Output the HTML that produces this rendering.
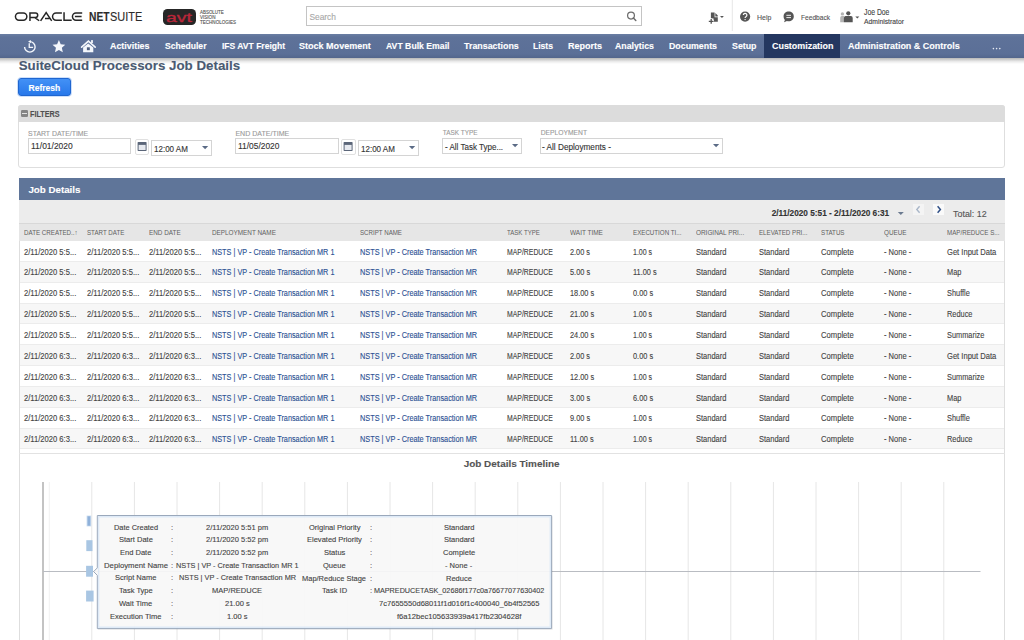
<!DOCTYPE html><html><head><meta charset="utf-8"><style>
html,body{margin:0;padding:0;}
body{width:1024px;height:640px;overflow:hidden;position:relative;background:#fff;font-family:"Liberation Sans",sans-serif;}
.t{position:absolute;white-space:nowrap;line-height:1;transform-origin:0 0;-webkit-text-stroke:0.12px currentColor;}
.r{position:absolute;box-sizing:border-box;}
svg{position:absolute;overflow:visible;}
</style></head><body>
<div class="r" style="left:0px;top:0px;width:1024px;height:34px;background:#fff"></div>
<svg style="left:0;top:0" width="160" height="34" viewBox="0 0 160 34">
<g fill="none" stroke="#262626" stroke-width="1.5">
<rect x="15.45" y="13.05" width="11.4" height="7.1" rx="3.55"/>
<path d="M29.95 20.9V13.05H35.5A2.2 2.2 0 0 1 35.5 17.45H30.7M34.6 17.45L39.2 20.75"/>
<path d="M40.6 20.8L46.15 12.7L51.7 20.8M45 18.5H49.8"/>
<path d="M61.9 13.05H56.1A3.55 3.55 0 0 0 56.1 20.15H61.9"/>
<path d="M64.05 12.3V20.15H71.7"/>
<path d="M82.2 13.05H76A3.55 3.55 0 0 0 76 20.15H82.2M74.9 16.6H81.6"/>
</g></svg>
<div class="t" style="left:88.60px;top:12px;font-size:11.919px;color:#2b2b2b;font-weight:bold;transform:scaleX(0.8600);">NET</div>
<div class="t" style="left:110.20px;top:12px;font-size:11.919px;color:#2b2b2b;transform:scaleX(0.9202);">SUITE</div>
<div class="r" style="left:163px;top:8.5px;width:33px;height:16.7px;background:#262626;border-radius:4.5px"></div>
<div class="t" style="left:166.20px;top:11px;font-size:13.000px;color:#b8263a;transform:scaleX(1.4877);-webkit-text-stroke:0.35px #b8263a;">avt</div>
<div class="t" style="left:199.80px;top:11px;font-size:4.651px;color:#555;transform:scaleX(0.9591);">ABSOLUTE</div>
<div class="t" style="left:199.80px;top:16px;font-size:4.651px;color:#555;transform:scaleX(0.9830);">VISION</div>
<div class="t" style="left:199.80px;top:21px;font-size:4.651px;color:#555;transform:scaleX(0.9795);">TECHNOLOGIES</div>
<div class="r" style="left:306px;top:6.2px;width:336px;height:20px;border:1px solid #c4c4c4;background:#fff"></div>
<div class="t" style="left:309.40px;top:13px;font-size:8.396px;color:#a8a8a8;">Search</div>
<svg style="left:620px;top:6px" width="22" height="20" viewBox="620 6 22 20">
<circle cx="631" cy="15.6" r="3.4" fill="none" stroke="#6d6d6d" stroke-width="1.25"/>
<path d="M633.4 18l2.4 2.5" stroke="#6d6d6d" stroke-width="1.5" stroke-linecap="round"/></svg>
<svg style="left:700px;top:0" width="220" height="34" viewBox="700 0 220 34">
<path d="M710.9 12.6H714.6V17.2H717.8V21.8H713.6V18.6H710.9Z" fill="#555"/>
<path d="M715.3 13.0L717.8 15.6V16.5H715.3Z" fill="#555"/>
<path d="M708.4 21.4H714M711.2 18.6V24.2" stroke="#fff" stroke-width="2.6"/>
<path d="M708.8 21.4H713.6M711.2 19V23.8" stroke="#555" stroke-width="1.3"/>
<path d="M720 16H723.9L721.95 18Z" fill="#555"/>
<path d="M732.3 0v31" stroke="#e6e6e6" stroke-width="1"/>
<circle cx="745.1" cy="16.6" r="5.1" fill="#555"/>
<path d="M743.3 15.1a1.8 1.8 0 1 1 2.6 1.6c-.6.3-.8.6-.8 1.2" fill="none" stroke="#fff" stroke-width="1.2"/>
<circle cx="745.1" cy="19.6" r=".7" fill="#fff"/>
<path d="M783.6 16.4c0-2.9 2.3-4.8 5.1-4.8s5.1 1.9 5.1 4.8-2.3 4.8-5.1 4.8c-.6 0-1.2-.1-1.7-.3l-3 1.4.9-2.4c-.8-.9-1.3-2-1.3-3.5z" fill="#555"/>
<path d="M786.4 15.3h4.6M786.4 17.6h4.6" stroke="#fff" stroke-width=".9"/>
<circle cx="842.4" cy="13.9" r="1.7" fill="#b4b4b4"/>
<path d="M840.2 22.3V17.7A1.6 1.6 0 0 1 841.8 16.1H844V22.3Z" fill="#b4b4b4"/>
<circle cx="848.3" cy="13.3" r="2.1" fill="#555"/>
<path d="M843.9 22.3V17.9A1.8 1.8 0 0 1 845.7 16.1H850.9A1.8 1.8 0 0 1 852.7 17.9V22.3Z" fill="#555"/>
<path d="M855.3 16.4h4l-2 2.2z" fill="#555"/>
</svg>
<div class="t" style="left:757.00px;top:14px;font-size:7.400px;color:#555;transform:scaleX(0.9394);">Help</div>
<div class="t" style="left:801.00px;top:14px;font-size:7.400px;color:#555;transform:scaleX(0.8950);">Feedback</div>
<div class="t" style="left:863.80px;top:8px;font-size:8.300px;color:#444;transform:scaleX(0.8215);">Joe Doe</div>
<div class="t" style="left:863.80px;top:19px;font-size:6.900px;color:#444;transform:scaleX(0.9841);">Administrator</div>
<div class="r" style="left:0px;top:34px;width:1024px;height:24px;background:linear-gradient(#6a7ea3 0px,#5e7299 3px,#5b6f97 20px,#53668c 24px)"></div>
<div class="r" style="left:0px;top:58px;width:1024px;height:6px;background:linear-gradient(rgba(0,0,0,0.28),rgba(0,0,0,0.08) 60%,rgba(0,0,0,0))"></div>
<div class="r" style="left:764px;top:34px;width:76.4px;height:24px;background:#243760"></div>
<svg style="left:0;top:34px" width="110" height="24" viewBox="0 34 110 24">
<path d="M24.6 46.9A5.25 5.25 0 1 0 29.85 41.65" fill="none" stroke="#f4f7fc" stroke-width="1.4"/>
<path d="M28.1 41.6L30.9 39.9V43.3Z" fill="#f4f7fc"/>
<path d="M29.25 43.3V47.45H33.1" fill="none" stroke="#f4f7fc" stroke-width="1.3"/>
<path d="M58.90 40.10L60.71 44.31L65.27 44.73L61.83 47.75L62.84 52.22L58.90 49.88L54.96 52.22L55.97 47.75L52.53 44.73L57.09 44.31Z" fill="#f4f7fc"/>
<path d="M81.6 47.1L88.4 41.1L95.2 47.1" fill="none" stroke="#f4f7fc" stroke-width="1.6" stroke-linecap="round"/>
<rect x="91.1" y="40.1" width="1.8" height="2.9" fill="#f4f7fc"/>
<path d="M83.1 47.6L88.2 43.4L93.3 47.6V52.3H83.1Z" fill="#f4f7fc"/>
<rect x="86.9" y="47.3" width="2.9" height="2.9" fill="#4f5f80"/>
</svg>
<div class="t" style="left:110.30px;top:42px;font-size:8.850px;color:#fff;font-weight:bold;transform:scaleX(1.0039);">Activities</div>
<div class="t" style="left:164.50px;top:42px;font-size:8.850px;color:#fff;font-weight:bold;transform:scaleX(0.9699);">Scheduler</div>
<div class="t" style="left:221.60px;top:42px;font-size:8.850px;color:#fff;font-weight:bold;transform:scaleX(0.9649);">IFS AVT Freight</div>
<div class="t" style="left:299.40px;top:42px;font-size:8.850px;color:#fff;font-weight:bold;transform:scaleX(1.0210);">Stock Movement</div>
<div class="t" style="left:385.90px;top:42px;font-size:8.850px;color:#fff;font-weight:bold;transform:scaleX(0.9807);">AVT Bulk Email</div>
<div class="t" style="left:464.30px;top:42px;font-size:8.850px;color:#fff;font-weight:bold;transform:scaleX(1.0037);">Transactions</div>
<div class="t" style="left:533.30px;top:42px;font-size:8.850px;color:#fff;font-weight:bold;transform:scaleX(0.9682);">Lists</div>
<div class="t" style="left:567.50px;top:42px;font-size:8.850px;color:#fff;font-weight:bold;transform:scaleX(1.0169);">Reports</div>
<div class="t" style="left:615.30px;top:42px;font-size:8.850px;color:#fff;font-weight:bold;transform:scaleX(0.9912);">Analytics</div>
<div class="t" style="left:669.20px;top:42px;font-size:8.850px;color:#fff;font-weight:bold;transform:scaleX(0.9961);">Documents</div>
<div class="t" style="left:732.00px;top:42px;font-size:8.850px;color:#fff;font-weight:bold;transform:scaleX(0.9965);">Setup</div>
<div class="t" style="left:771.60px;top:42px;font-size:8.850px;color:#fff;font-weight:bold;transform:scaleX(1.0087);">Customization</div>
<div class="t" style="left:847.60px;top:42px;font-size:8.850px;color:#fff;font-weight:bold;transform:scaleX(1.0152);">Administration &amp; Controls</div>
<svg style="left:990px;top:46px" width="14" height="6" viewBox="990 46 14 6"><circle cx="993.4" cy="48.6" r=".8" fill="#e8ecf4"/><circle cx="996.6" cy="48.6" r=".8" fill="#e8ecf4"/><circle cx="999.8" cy="48.6" r=".8" fill="#e8ecf4"/></svg>
<div class="t" style="left:18.70px;top:59px;font-size:13.331px;color:#4a5a72;font-weight:bold;">SuiteCloud Processors Job Details</div>
<div class="r" style="left:17.8px;top:77.6px;width:53.2px;height:18.8px;background:linear-gradient(#4391f6,#2878ea);border:1px solid #1f66d0;border-radius:3px;box-shadow:0 0 0 0.8px rgba(110,165,240,0.45)"></div>
<div class="t" style="left:28.50px;top:84px;font-size:8.539px;color:#fff;font-weight:bold;">Refresh</div>
<div class="r" style="left:18.2px;top:105.1px;width:987.2px;height:63.3px;border:1px solid #dedede;border-radius:3px;background:#fff"></div>
<div class="r" style="left:18.2px;top:105.1px;width:987.2px;height:17.1px;background:#dcdcdc;border-radius:3px 3px 0 0"></div>
<div class="r" style="left:20.9px;top:109.7px;width:6.9px;height:6.9px;background:#858585;border-radius:1.2px"></div>
<div class="r" style="left:21.9px;top:112.5px;width:4.9px;height:1.5px;background:#e4e4e4"></div>
<div class="t" style="left:30.20px;top:110px;font-size:8.400px;color:#505050;font-weight:bold;transform:scaleX(0.8641);">FILTERS</div>
<div class="t" style="left:28.10px;top:131px;font-size:6.916px;color:#9a9a9a;">START DATE/TIME</div>
<div class="t" style="left:235.40px;top:130px;font-size:7.061px;color:#9a9a9a;">END DATE/TIME</div>
<div class="t" style="left:442.80px;top:130px;font-size:6.415px;color:#9a9a9a;">TASK TYPE</div>
<div class="t" style="left:540.70px;top:130px;font-size:6.720px;color:#9a9a9a;">DEPLOYMENT</div>
<div class="r" style="left:28.1px;top:138.4px;width:103.2px;height:16px;border:1px solid #d4d4d4;background:#fff"></div>
<div class="r" style="left:235px;top:138.4px;width:103.6px;height:16px;border:1px solid #d4d4d4;background:#fff"></div>
<div class="t" style="left:30.50px;top:142px;font-size:8.500px;color:#333;transform:scaleX(0.9949);">11/01/2020</div>
<div class="t" style="left:238.00px;top:142px;font-size:8.500px;color:#333;transform:scaleX(0.9877);">11/05/2020</div>
<div class="r" style="left:134.5px;top:139px;width:14.4px;height:15.6px;border:1px solid #e0e0e0;border-radius:2px;background:#fff"></div>
<svg style="left:134.5px;top:139px" width="14" height="16" viewBox="0 0 14 16">
<rect x="2.6" y="3.0" width="9" height="9" rx=".7" fill="#5b6679"/>
<rect x="3.6" y="5.9" width="7" height="5.1" fill="#e6e9ef"/></svg>
<div class="r" style="left:341.4px;top:139px;width:14.4px;height:15.6px;border:1px solid #e0e0e0;border-radius:2px;background:#fff"></div>
<svg style="left:341.4px;top:139px" width="14" height="16" viewBox="0 0 14 16">
<rect x="2.6" y="3.0" width="9" height="9" rx=".7" fill="#5b6679"/>
<rect x="3.6" y="5.9" width="7" height="5.1" fill="#e6e9ef"/></svg>
<div class="r" style="left:151.1px;top:139.6px;width:60.7px;height:16.1px;border:1px solid #d4d4d4;background:#fff"></div>
<div class="t" style="left:153.80px;top:145px;font-size:8.500px;color:#333;transform:scaleX(0.9440);">12:00 AM</div>
<svg style="left:202.20px;top:146.00px" width="7" height="4" viewBox="0 0 7 4"><path d="M0 0h6.2l-3.1 3.3z" fill="#5b6b86"/></svg>
<div class="r" style="left:358px;top:139.6px;width:61px;height:16px;border:1px solid #d4d4d4;background:#fff"></div>
<div class="t" style="left:360.60px;top:145px;font-size:8.500px;color:#333;transform:scaleX(0.9440);">12:00 AM</div>
<svg style="left:409.40px;top:146.00px" width="7" height="4" viewBox="0 0 7 4"><path d="M0 0h6.2l-3.1 3.3z" fill="#5b6b86"/></svg>
<div class="r" style="left:442.3px;top:137.7px;width:79.4px;height:16.1px;border:1px solid #d4d4d4;background:#fff"></div>
<div class="t" style="left:445.30px;top:143px;font-size:8.500px;color:#333;transform:scaleX(0.9436);">- All Task Type...</div>
<svg style="left:512.10px;top:144.10px" width="7" height="4" viewBox="0 0 7 4"><path d="M0 0h6.2l-3.1 3.3z" fill="#5b6b86"/></svg>
<div class="r" style="left:540.2px;top:138px;width:182.8px;height:15.7px;border:1px solid #d4d4d4;background:#fff"></div>
<div class="t" style="left:542.10px;top:143px;font-size:8.500px;color:#333;transform:scaleX(0.9659);">- All Deployments -</div>
<svg style="left:713.40px;top:144.40px" width="7" height="4" viewBox="0 0 7 4"><path d="M0 0h6.2l-3.1 3.3z" fill="#5b6b86"/></svg>
<div class="r" style="left:18.5px;top:178.5px;width:986.3px;height:462px;border-left:1px solid #dedede;border-right:1px solid #dedede;background:#fff"></div>
<div class="r" style="left:18.5px;top:178.3px;width:986.3px;height:21.7px;background:#5f7599"></div>
<div class="t" style="left:28.40px;top:185px;font-size:9.750px;color:#fff;font-weight:bold;">Job Details</div>
<div class="r" style="left:18.5px;top:200px;width:986.3px;height:23px;background:#ececec"></div>
<div class="r" style="left:18.5px;top:223px;width:986.3px;height:1px;background:#d8d8d8"></div>
<div class="r" style="left:18.5px;top:224.3px;width:986.3px;height:16.7px;background:#e6e6e6"></div>
<div class="t" style="left:771.70px;top:210px;font-size:8.269px;color:#333;font-weight:bold;">2/11/2020 5:51 - 2/11/2020 6:31</div>
<svg style="left:896px;top:210px" width="10" height="6" viewBox="896 210 10 6"><path d="M897.8 212h6l-3 3.1z" fill="#6b7a90"/></svg>
<div class="r" style="left:912.6px;top:204px;width:11px;height:11px;background:#f4f4f4"></div>
<div class="r" style="left:933.3px;top:204px;width:11px;height:11px;background:#fafafa"></div>
<svg style="left:910px;top:202px" width="40" height="16" viewBox="910 202 40 16">
<path d="M919.6 206.3l-2.8 3.2 2.8 3.2" fill="none" stroke="#a9b6c8" stroke-width="1.4"/>
<path d="M937.6 206.3l2.8 3.2-2.8 3.2" fill="none" stroke="#2f4f86" stroke-width="1.5"/></svg>
<div class="t" style="left:952.90px;top:210px;font-size:8.600px;color:#555;transform:scaleX(1.0367);">Total: 12</div>
<div class="t" style="left:23.90px;top:230px;font-size:6.800px;color:#606060;transform:scaleX(0.9151);-webkit-text-stroke:0;">DATE CREATED..↑</div>
<div class="t" style="left:86.75px;top:230px;font-size:6.800px;color:#606060;transform:scaleX(0.9085);-webkit-text-stroke:0;">START DATE</div>
<div class="t" style="left:149.40px;top:230px;font-size:6.800px;color:#606060;transform:scaleX(0.9357);-webkit-text-stroke:0;">END DATE</div>
<div class="t" style="left:212.40px;top:230px;font-size:6.800px;color:#606060;transform:scaleX(0.9361);-webkit-text-stroke:0;">DEPLOYMENT NAME</div>
<div class="t" style="left:359.90px;top:230px;font-size:6.800px;color:#606060;transform:scaleX(0.9062);-webkit-text-stroke:0;">SCRIPT NAME</div>
<div class="t" style="left:507.00px;top:230px;font-size:6.800px;color:#606060;transform:scaleX(0.8918);-webkit-text-stroke:0;">TASK TYPE</div>
<div class="t" style="left:569.90px;top:230px;font-size:6.800px;color:#606060;transform:scaleX(0.9500);-webkit-text-stroke:0;">WAIT TIME</div>
<div class="t" style="left:632.90px;top:230px;font-size:6.800px;color:#606060;transform:scaleX(0.9107);-webkit-text-stroke:0;">EXECUTION TI...</div>
<div class="t" style="left:695.60px;top:230px;font-size:6.800px;color:#606060;transform:scaleX(0.9426);-webkit-text-stroke:0;">ORIGINAL PRI...</div>
<div class="t" style="left:758.75px;top:230px;font-size:6.800px;color:#606060;transform:scaleX(0.9081);-webkit-text-stroke:0;">ELEVATED PRI...</div>
<div class="t" style="left:821.25px;top:230px;font-size:6.800px;color:#606060;transform:scaleX(0.9104);-webkit-text-stroke:0;">STATUS</div>
<div class="t" style="left:883.75px;top:230px;font-size:6.800px;color:#606060;transform:scaleX(0.9305);-webkit-text-stroke:0;">QUEUE</div>
<div class="t" style="left:946.90px;top:230px;font-size:6.800px;color:#606060;transform:scaleX(0.9141);-webkit-text-stroke:0;">MAP/REDUCE S...</div>
<div class="r" style="left:19.5px;top:241.0px;width:984.3px;height:20.85px;background:#fff;border-bottom:1px solid #ececec"></div>
<div class="t" style="left:23.90px;top:248px;font-size:8.300px;color:#444;transform:scaleX(0.9164);">2/11/2020 5:5...</div>
<div class="t" style="left:86.75px;top:248px;font-size:8.300px;color:#444;transform:scaleX(0.9164);">2/11/2020 5:5...</div>
<div class="t" style="left:149.40px;top:248px;font-size:8.300px;color:#444;transform:scaleX(0.9164);">2/11/2020 5:5...</div>
<div class="t" style="left:212.40px;top:248px;font-size:8.300px;color:#2b5193;transform:scaleX(0.8784);">NSTS | VP - Create Transaction MR 1</div>
<div class="t" style="left:359.90px;top:248px;font-size:8.300px;color:#2b5193;transform:scaleX(0.8835);">NSTS | VP - Create Transaction MR</div>
<div class="t" style="left:507.00px;top:248px;font-size:8.300px;color:#444;transform:scaleX(0.8294);">MAP/REDUCE</div>
<div class="t" style="left:569.90px;top:248px;font-size:8.300px;color:#444;transform:scaleX(0.8846);">2.00 s</div>
<div class="t" style="left:632.90px;top:248px;font-size:8.300px;color:#444;transform:scaleX(0.8448);">1.00 s</div>
<div class="t" style="left:695.60px;top:248px;font-size:8.300px;color:#444;transform:scaleX(0.9024);">Standard</div>
<div class="t" style="left:758.75px;top:248px;font-size:8.300px;color:#444;transform:scaleX(0.9024);">Standard</div>
<div class="t" style="left:821.25px;top:248px;font-size:8.300px;color:#444;transform:scaleX(0.9219);">Complete</div>
<div class="t" style="left:883.75px;top:248px;font-size:8.300px;color:#444;transform:scaleX(0.9090);">- None -</div>
<div class="t" style="left:946.90px;top:248px;font-size:8.300px;color:#444;transform:scaleX(0.9140);">Get Input Data</div>
<div class="r" style="left:19.5px;top:261.85px;width:984.3px;height:20.85px;background:#f7f7f7;border-bottom:1px solid #ececec"></div>
<div class="t" style="left:23.90px;top:268px;font-size:8.300px;color:#444;transform:scaleX(0.9164);">2/11/2020 5:5...</div>
<div class="t" style="left:86.75px;top:268px;font-size:8.300px;color:#444;transform:scaleX(0.9164);">2/11/2020 5:5...</div>
<div class="t" style="left:149.40px;top:268px;font-size:8.300px;color:#444;transform:scaleX(0.9164);">2/11/2020 5:5...</div>
<div class="t" style="left:212.40px;top:268px;font-size:8.300px;color:#2b5193;transform:scaleX(0.8784);">NSTS | VP - Create Transaction MR 1</div>
<div class="t" style="left:359.90px;top:268px;font-size:8.300px;color:#2b5193;transform:scaleX(0.8835);">NSTS | VP - Create Transaction MR</div>
<div class="t" style="left:507.00px;top:268px;font-size:8.300px;color:#444;transform:scaleX(0.8294);">MAP/REDUCE</div>
<div class="t" style="left:569.90px;top:268px;font-size:8.300px;color:#444;transform:scaleX(0.8900);">5.00 s</div>
<div class="t" style="left:632.90px;top:268px;font-size:8.300px;color:#444;transform:scaleX(0.8900);">11.00 s</div>
<div class="t" style="left:695.60px;top:268px;font-size:8.300px;color:#444;transform:scaleX(0.9024);">Standard</div>
<div class="t" style="left:758.75px;top:268px;font-size:8.300px;color:#444;transform:scaleX(0.9024);">Standard</div>
<div class="t" style="left:821.25px;top:268px;font-size:8.300px;color:#444;transform:scaleX(0.9219);">Complete</div>
<div class="t" style="left:883.75px;top:268px;font-size:8.300px;color:#444;transform:scaleX(0.9090);">- None -</div>
<div class="t" style="left:946.90px;top:268px;font-size:8.300px;color:#444;transform:scaleX(0.8900);">Map</div>
<div class="r" style="left:19.5px;top:282.7px;width:984.3px;height:20.85px;background:#fff;border-bottom:1px solid #ececec"></div>
<div class="t" style="left:23.90px;top:289px;font-size:8.300px;color:#444;transform:scaleX(0.9164);">2/11/2020 5:5...</div>
<div class="t" style="left:86.75px;top:289px;font-size:8.300px;color:#444;transform:scaleX(0.9164);">2/11/2020 5:5...</div>
<div class="t" style="left:149.40px;top:289px;font-size:8.300px;color:#444;transform:scaleX(0.9164);">2/11/2020 5:5...</div>
<div class="t" style="left:212.40px;top:289px;font-size:8.300px;color:#2b5193;transform:scaleX(0.8784);">NSTS | VP - Create Transaction MR 1</div>
<div class="t" style="left:359.90px;top:289px;font-size:8.300px;color:#2b5193;transform:scaleX(0.8835);">NSTS | VP - Create Transaction MR</div>
<div class="t" style="left:507.00px;top:289px;font-size:8.300px;color:#444;transform:scaleX(0.8294);">MAP/REDUCE</div>
<div class="t" style="left:569.90px;top:289px;font-size:8.300px;color:#444;transform:scaleX(0.8900);">18.00 s</div>
<div class="t" style="left:632.90px;top:289px;font-size:8.300px;color:#444;transform:scaleX(0.8900);">0.00 s</div>
<div class="t" style="left:695.60px;top:289px;font-size:8.300px;color:#444;transform:scaleX(0.9024);">Standard</div>
<div class="t" style="left:758.75px;top:289px;font-size:8.300px;color:#444;transform:scaleX(0.9024);">Standard</div>
<div class="t" style="left:821.25px;top:289px;font-size:8.300px;color:#444;transform:scaleX(0.9219);">Complete</div>
<div class="t" style="left:883.75px;top:289px;font-size:8.300px;color:#444;transform:scaleX(0.9090);">- None -</div>
<div class="t" style="left:946.90px;top:289px;font-size:8.300px;color:#444;transform:scaleX(0.8900);">Shuffle</div>
<div class="r" style="left:19.5px;top:303.55px;width:984.3px;height:20.85px;background:#f7f7f7;border-bottom:1px solid #ececec"></div>
<div class="t" style="left:23.90px;top:310px;font-size:8.300px;color:#444;transform:scaleX(0.9164);">2/11/2020 5:5...</div>
<div class="t" style="left:86.75px;top:310px;font-size:8.300px;color:#444;transform:scaleX(0.9164);">2/11/2020 5:5...</div>
<div class="t" style="left:149.40px;top:310px;font-size:8.300px;color:#444;transform:scaleX(0.9164);">2/11/2020 5:5...</div>
<div class="t" style="left:212.40px;top:310px;font-size:8.300px;color:#2b5193;transform:scaleX(0.8784);">NSTS | VP - Create Transaction MR 1</div>
<div class="t" style="left:359.90px;top:310px;font-size:8.300px;color:#2b5193;transform:scaleX(0.8835);">NSTS | VP - Create Transaction MR</div>
<div class="t" style="left:507.00px;top:310px;font-size:8.300px;color:#444;transform:scaleX(0.8294);">MAP/REDUCE</div>
<div class="t" style="left:569.90px;top:310px;font-size:8.300px;color:#444;transform:scaleX(0.8900);">21.00 s</div>
<div class="t" style="left:632.90px;top:310px;font-size:8.300px;color:#444;transform:scaleX(0.8448);">1.00 s</div>
<div class="t" style="left:695.60px;top:310px;font-size:8.300px;color:#444;transform:scaleX(0.9024);">Standard</div>
<div class="t" style="left:758.75px;top:310px;font-size:8.300px;color:#444;transform:scaleX(0.9024);">Standard</div>
<div class="t" style="left:821.25px;top:310px;font-size:8.300px;color:#444;transform:scaleX(0.9219);">Complete</div>
<div class="t" style="left:883.75px;top:310px;font-size:8.300px;color:#444;transform:scaleX(0.9090);">- None -</div>
<div class="t" style="left:946.90px;top:310px;font-size:8.300px;color:#444;transform:scaleX(0.8900);">Reduce</div>
<div class="r" style="left:19.5px;top:324.4px;width:984.3px;height:20.85px;background:#fff;border-bottom:1px solid #ececec"></div>
<div class="t" style="left:23.90px;top:331px;font-size:8.300px;color:#444;transform:scaleX(0.9164);">2/11/2020 5:5...</div>
<div class="t" style="left:86.75px;top:331px;font-size:8.300px;color:#444;transform:scaleX(0.9164);">2/11/2020 5:5...</div>
<div class="t" style="left:149.40px;top:331px;font-size:8.300px;color:#444;transform:scaleX(0.9164);">2/11/2020 5:5...</div>
<div class="t" style="left:212.40px;top:331px;font-size:8.300px;color:#2b5193;transform:scaleX(0.8784);">NSTS | VP - Create Transaction MR 1</div>
<div class="t" style="left:359.90px;top:331px;font-size:8.300px;color:#2b5193;transform:scaleX(0.8835);">NSTS | VP - Create Transaction MR</div>
<div class="t" style="left:507.00px;top:331px;font-size:8.300px;color:#444;transform:scaleX(0.8294);">MAP/REDUCE</div>
<div class="t" style="left:569.90px;top:331px;font-size:8.300px;color:#444;transform:scaleX(0.8900);">24.00 s</div>
<div class="t" style="left:632.90px;top:331px;font-size:8.300px;color:#444;transform:scaleX(0.8448);">1.00 s</div>
<div class="t" style="left:695.60px;top:331px;font-size:8.300px;color:#444;transform:scaleX(0.9024);">Standard</div>
<div class="t" style="left:758.75px;top:331px;font-size:8.300px;color:#444;transform:scaleX(0.9024);">Standard</div>
<div class="t" style="left:821.25px;top:331px;font-size:8.300px;color:#444;transform:scaleX(0.9219);">Complete</div>
<div class="t" style="left:883.75px;top:331px;font-size:8.300px;color:#444;transform:scaleX(0.9090);">- None -</div>
<div class="t" style="left:946.90px;top:331px;font-size:8.300px;color:#444;transform:scaleX(0.8900);">Summarize</div>
<div class="r" style="left:19.5px;top:345.25px;width:984.3px;height:20.85px;background:#f7f7f7;border-bottom:1px solid #ececec"></div>
<div class="t" style="left:23.90px;top:352px;font-size:8.300px;color:#444;transform:scaleX(0.9164);">2/11/2020 6:3...</div>
<div class="t" style="left:86.75px;top:352px;font-size:8.300px;color:#444;transform:scaleX(0.9164);">2/11/2020 6:3...</div>
<div class="t" style="left:149.40px;top:352px;font-size:8.300px;color:#444;transform:scaleX(0.9164);">2/11/2020 6:3...</div>
<div class="t" style="left:212.40px;top:352px;font-size:8.300px;color:#2b5193;transform:scaleX(0.8784);">NSTS | VP - Create Transaction MR 1</div>
<div class="t" style="left:359.90px;top:352px;font-size:8.300px;color:#2b5193;transform:scaleX(0.8835);">NSTS | VP - Create Transaction MR</div>
<div class="t" style="left:507.00px;top:352px;font-size:8.300px;color:#444;transform:scaleX(0.8294);">MAP/REDUCE</div>
<div class="t" style="left:569.90px;top:352px;font-size:8.300px;color:#444;transform:scaleX(0.8846);">2.00 s</div>
<div class="t" style="left:632.90px;top:352px;font-size:8.300px;color:#444;transform:scaleX(0.8900);">0.00 s</div>
<div class="t" style="left:695.60px;top:352px;font-size:8.300px;color:#444;transform:scaleX(0.9024);">Standard</div>
<div class="t" style="left:758.75px;top:352px;font-size:8.300px;color:#444;transform:scaleX(0.9024);">Standard</div>
<div class="t" style="left:821.25px;top:352px;font-size:8.300px;color:#444;transform:scaleX(0.9219);">Complete</div>
<div class="t" style="left:883.75px;top:352px;font-size:8.300px;color:#444;transform:scaleX(0.9090);">- None -</div>
<div class="t" style="left:946.90px;top:352px;font-size:8.300px;color:#444;transform:scaleX(0.9140);">Get Input Data</div>
<div class="r" style="left:19.5px;top:366.1px;width:984.3px;height:20.85px;background:#fff;border-bottom:1px solid #ececec"></div>
<div class="t" style="left:23.90px;top:373px;font-size:8.300px;color:#444;transform:scaleX(0.9164);">2/11/2020 6:3...</div>
<div class="t" style="left:86.75px;top:373px;font-size:8.300px;color:#444;transform:scaleX(0.9164);">2/11/2020 6:3...</div>
<div class="t" style="left:149.40px;top:373px;font-size:8.300px;color:#444;transform:scaleX(0.9164);">2/11/2020 6:3...</div>
<div class="t" style="left:212.40px;top:373px;font-size:8.300px;color:#2b5193;transform:scaleX(0.8784);">NSTS | VP - Create Transaction MR 1</div>
<div class="t" style="left:359.90px;top:373px;font-size:8.300px;color:#2b5193;transform:scaleX(0.8835);">NSTS | VP - Create Transaction MR</div>
<div class="t" style="left:507.00px;top:373px;font-size:8.300px;color:#444;transform:scaleX(0.8294);">MAP/REDUCE</div>
<div class="t" style="left:569.90px;top:373px;font-size:8.300px;color:#444;transform:scaleX(0.8900);">12.00 s</div>
<div class="t" style="left:632.90px;top:373px;font-size:8.300px;color:#444;transform:scaleX(0.8448);">1.00 s</div>
<div class="t" style="left:695.60px;top:373px;font-size:8.300px;color:#444;transform:scaleX(0.9024);">Standard</div>
<div class="t" style="left:758.75px;top:373px;font-size:8.300px;color:#444;transform:scaleX(0.9024);">Standard</div>
<div class="t" style="left:821.25px;top:373px;font-size:8.300px;color:#444;transform:scaleX(0.9219);">Complete</div>
<div class="t" style="left:883.75px;top:373px;font-size:8.300px;color:#444;transform:scaleX(0.9090);">- None -</div>
<div class="t" style="left:946.90px;top:373px;font-size:8.300px;color:#444;transform:scaleX(0.8900);">Summarize</div>
<div class="r" style="left:19.5px;top:386.95000000000005px;width:984.3px;height:20.85px;background:#f7f7f7;border-bottom:1px solid #ececec"></div>
<div class="t" style="left:23.90px;top:394px;font-size:8.300px;color:#444;transform:scaleX(0.9164);">2/11/2020 6:3...</div>
<div class="t" style="left:86.75px;top:394px;font-size:8.300px;color:#444;transform:scaleX(0.9164);">2/11/2020 6:3...</div>
<div class="t" style="left:149.40px;top:394px;font-size:8.300px;color:#444;transform:scaleX(0.9164);">2/11/2020 6:3...</div>
<div class="t" style="left:212.40px;top:394px;font-size:8.300px;color:#2b5193;transform:scaleX(0.8784);">NSTS | VP - Create Transaction MR 1</div>
<div class="t" style="left:359.90px;top:394px;font-size:8.300px;color:#2b5193;transform:scaleX(0.8835);">NSTS | VP - Create Transaction MR</div>
<div class="t" style="left:507.00px;top:394px;font-size:8.300px;color:#444;transform:scaleX(0.8294);">MAP/REDUCE</div>
<div class="t" style="left:569.90px;top:394px;font-size:8.300px;color:#444;transform:scaleX(0.8900);">3.00 s</div>
<div class="t" style="left:632.90px;top:394px;font-size:8.300px;color:#444;transform:scaleX(0.8900);">6.00 s</div>
<div class="t" style="left:695.60px;top:394px;font-size:8.300px;color:#444;transform:scaleX(0.9024);">Standard</div>
<div class="t" style="left:758.75px;top:394px;font-size:8.300px;color:#444;transform:scaleX(0.9024);">Standard</div>
<div class="t" style="left:821.25px;top:394px;font-size:8.300px;color:#444;transform:scaleX(0.9219);">Complete</div>
<div class="t" style="left:883.75px;top:394px;font-size:8.300px;color:#444;transform:scaleX(0.9090);">- None -</div>
<div class="t" style="left:946.90px;top:394px;font-size:8.300px;color:#444;transform:scaleX(0.8900);">Map</div>
<div class="r" style="left:19.5px;top:407.8px;width:984.3px;height:20.85px;background:#fff;border-bottom:1px solid #ececec"></div>
<div class="t" style="left:23.90px;top:414px;font-size:8.300px;color:#444;transform:scaleX(0.9164);">2/11/2020 6:3...</div>
<div class="t" style="left:86.75px;top:414px;font-size:8.300px;color:#444;transform:scaleX(0.9164);">2/11/2020 6:3...</div>
<div class="t" style="left:149.40px;top:414px;font-size:8.300px;color:#444;transform:scaleX(0.9164);">2/11/2020 6:3...</div>
<div class="t" style="left:212.40px;top:414px;font-size:8.300px;color:#2b5193;transform:scaleX(0.8784);">NSTS | VP - Create Transaction MR 1</div>
<div class="t" style="left:359.90px;top:414px;font-size:8.300px;color:#2b5193;transform:scaleX(0.8835);">NSTS | VP - Create Transaction MR</div>
<div class="t" style="left:507.00px;top:414px;font-size:8.300px;color:#444;transform:scaleX(0.8294);">MAP/REDUCE</div>
<div class="t" style="left:569.90px;top:414px;font-size:8.300px;color:#444;transform:scaleX(0.8900);">9.00 s</div>
<div class="t" style="left:632.90px;top:414px;font-size:8.300px;color:#444;transform:scaleX(0.8448);">1.00 s</div>
<div class="t" style="left:695.60px;top:414px;font-size:8.300px;color:#444;transform:scaleX(0.9024);">Standard</div>
<div class="t" style="left:758.75px;top:414px;font-size:8.300px;color:#444;transform:scaleX(0.9024);">Standard</div>
<div class="t" style="left:821.25px;top:414px;font-size:8.300px;color:#444;transform:scaleX(0.9219);">Complete</div>
<div class="t" style="left:883.75px;top:414px;font-size:8.300px;color:#444;transform:scaleX(0.9090);">- None -</div>
<div class="t" style="left:946.90px;top:414px;font-size:8.300px;color:#444;transform:scaleX(0.8900);">Shuffle</div>
<div class="r" style="left:19.5px;top:428.65px;width:984.3px;height:20.85px;background:#f7f7f7;border-bottom:1px solid #ececec"></div>
<div class="t" style="left:23.90px;top:435px;font-size:8.300px;color:#444;transform:scaleX(0.9164);">2/11/2020 6:3...</div>
<div class="t" style="left:86.75px;top:435px;font-size:8.300px;color:#444;transform:scaleX(0.9164);">2/11/2020 6:3...</div>
<div class="t" style="left:149.40px;top:435px;font-size:8.300px;color:#444;transform:scaleX(0.9164);">2/11/2020 6:3...</div>
<div class="t" style="left:212.40px;top:435px;font-size:8.300px;color:#2b5193;transform:scaleX(0.8784);">NSTS | VP - Create Transaction MR 1</div>
<div class="t" style="left:359.90px;top:435px;font-size:8.300px;color:#2b5193;transform:scaleX(0.8835);">NSTS | VP - Create Transaction MR</div>
<div class="t" style="left:507.00px;top:435px;font-size:8.300px;color:#444;transform:scaleX(0.8294);">MAP/REDUCE</div>
<div class="t" style="left:569.90px;top:435px;font-size:8.300px;color:#444;transform:scaleX(0.8900);">11.00 s</div>
<div class="t" style="left:632.90px;top:435px;font-size:8.300px;color:#444;transform:scaleX(0.8448);">1.00 s</div>
<div class="t" style="left:695.60px;top:435px;font-size:8.300px;color:#444;transform:scaleX(0.9024);">Standard</div>
<div class="t" style="left:758.75px;top:435px;font-size:8.300px;color:#444;transform:scaleX(0.9024);">Standard</div>
<div class="t" style="left:821.25px;top:435px;font-size:8.300px;color:#444;transform:scaleX(0.9219);">Complete</div>
<div class="t" style="left:883.75px;top:435px;font-size:8.300px;color:#444;transform:scaleX(0.9090);">- None -</div>
<div class="t" style="left:946.90px;top:435px;font-size:8.300px;color:#444;transform:scaleX(0.8900);">Reduce</div>
<div class="r" style="left:18.5px;top:453px;width:986.3px;height:1.2px;background:#e2e2e2"></div>
<div class="t" style="left:463.70px;top:459px;font-size:9.958px;color:#555;font-weight:bold;">Job Details Timeline</div>
<svg style="left:0;top:0" width="1024" height="640" viewBox="0 0 1024 640"><path d="M91.80 482V640" stroke="#e6e6e6" stroke-width="1"/><path d="M134.40 482V640" stroke="#e6e6e6" stroke-width="1"/><path d="M177.00 482V640" stroke="#e6e6e6" stroke-width="1"/><path d="M219.60 482V640" stroke="#e6e6e6" stroke-width="1"/><path d="M262.20 482V640" stroke="#e6e6e6" stroke-width="1"/><path d="M304.80 482V640" stroke="#e6e6e6" stroke-width="1"/><path d="M347.40 482V640" stroke="#e6e6e6" stroke-width="1"/><path d="M390.00 482V640" stroke="#e6e6e6" stroke-width="1"/><path d="M432.60 482V640" stroke="#e6e6e6" stroke-width="1"/><path d="M475.20 482V640" stroke="#e6e6e6" stroke-width="1"/><path d="M517.80 482V640" stroke="#e6e6e6" stroke-width="1"/><path d="M560.40 482V640" stroke="#e6e6e6" stroke-width="1"/><path d="M603.00 482V640" stroke="#e6e6e6" stroke-width="1"/><path d="M645.60 482V640" stroke="#e6e6e6" stroke-width="1"/><path d="M688.20 482V640" stroke="#e6e6e6" stroke-width="1"/><path d="M730.80 482V640" stroke="#e6e6e6" stroke-width="1"/><path d="M773.40 482V640" stroke="#e6e6e6" stroke-width="1"/><path d="M816.00 482V640" stroke="#e6e6e6" stroke-width="1"/><path d="M858.60 482V640" stroke="#e6e6e6" stroke-width="1"/><path d="M901.20 482V640" stroke="#e6e6e6" stroke-width="1"/><path d="M943.80 482V640" stroke="#e6e6e6" stroke-width="1"/><path d="M49.3 482V640" stroke="#f0f0f0" stroke-width="1"/><path d="M43 482V640" stroke="#b4b4b4" stroke-width="1.6"/><path d="M43 571.5H980.5" stroke="#b9bcc2" stroke-width="1"/><rect x="86.6" y="515.6" width="4.6" height="10.8" fill="#c9dbef"/><rect x="87.5" y="516.3" width="2.8" height="9.4" fill="#8fb1da"/><rect x="86.3" y="540.2" width="6.200000000000003" height="10.9" fill="#a9c6e3"/><rect x="86.1" y="565.8" width="6.900000000000006" height="10.9" fill="#a9c6e3"/><rect x="86.1" y="590.6" width="7.5" height="10.9" fill="#a9c6e3"/></svg>
<svg style="left:90px;top:512px" width="466" height="122" viewBox="90 512 466 122">
<path d="M97.3 515.5H551.6V628.6H97.3V575.3L93.6 571.6L97.3 567.9Z" fill="rgba(248,248,248,0.93)" stroke="#9aa8bb" stroke-width="1"/><path d="M98.6 516.8H550.3V627.3H98.6Z" fill="none" stroke="rgba(200,222,245,0.55)" stroke-width="1.4"/>
<path d="M98 629.4H552.4V516.3" fill="none" stroke="rgba(0,0,0,0.06)" stroke-width="1"/>
</svg>
<div class="t" style="left:113.75px;top:524px;font-size:8.000px;color:#444;transform:scaleX(0.9268);">Date Created</div>
<div class="t" style="left:171.40px;top:524px;font-size:8.000px;color:#444;transform:scaleX(0.9400);">:</div>
<div class="t" style="left:206.42px;top:524px;font-size:8.000px;color:#444;transform:scaleX(0.9400);">2/11/2020 5:51 pm</div>
<div class="t" style="left:118.87px;top:536px;font-size:8.000px;color:#444;transform:scaleX(0.9400);">Start Date</div>
<div class="t" style="left:171.40px;top:536px;font-size:8.000px;color:#444;transform:scaleX(0.9400);">:</div>
<div class="t" style="left:206.42px;top:536px;font-size:8.000px;color:#444;transform:scaleX(0.9400);">2/11/2020 5:52 pm</div>
<div class="t" style="left:120.12px;top:549px;font-size:8.000px;color:#444;transform:scaleX(0.9400);">End Date</div>
<div class="t" style="left:171.40px;top:549px;font-size:8.000px;color:#444;transform:scaleX(0.9400);">:</div>
<div class="t" style="left:206.42px;top:549px;font-size:8.000px;color:#444;transform:scaleX(0.9400);">2/11/2020 5:52 pm</div>
<div class="t" style="left:103.80px;top:562px;font-size:8.000px;color:#444;transform:scaleX(0.9661);">Deployment Name</div>
<div class="t" style="left:171.40px;top:562px;font-size:8.000px;color:#444;transform:scaleX(0.9400);">:</div>
<div class="t" style="left:176.20px;top:562px;font-size:8.000px;color:#444;transform:scaleX(0.9120);">NSTS | VP - Create Transaction MR 1</div>
<div class="t" style="left:115.11px;top:574px;font-size:8.000px;color:#444;transform:scaleX(0.9400);">Script Name</div>
<div class="t" style="left:171.40px;top:574px;font-size:8.000px;color:#444;transform:scaleX(0.9400);">:</div>
<div class="t" style="left:178.95px;top:574px;font-size:8.000px;color:#444;transform:scaleX(0.9166);">NSTS | VP - Create Transaction MR</div>
<div class="t" style="left:118.94px;top:587px;font-size:8.000px;color:#444;transform:scaleX(0.9400);">Task Type</div>
<div class="t" style="left:171.40px;top:587px;font-size:8.000px;color:#444;transform:scaleX(0.9400);">:</div>
<div class="t" style="left:212.43px;top:587px;font-size:8.000px;color:#444;transform:scaleX(0.9400);">MAP/REDUCE</div>
<div class="t" style="left:119.23px;top:600px;font-size:8.000px;color:#444;transform:scaleX(0.9400);">Wait Time</div>
<div class="t" style="left:171.40px;top:600px;font-size:8.000px;color:#444;transform:scaleX(0.9400);">:</div>
<div class="t" style="left:225.17px;top:600px;font-size:8.000px;color:#444;transform:scaleX(0.9400);">21.00 s</div>
<div class="t" style="left:110.10px;top:613px;font-size:8.000px;color:#444;transform:scaleX(0.9400);">Execution Time</div>
<div class="t" style="left:171.40px;top:613px;font-size:8.000px;color:#444;transform:scaleX(0.9400);">:</div>
<div class="t" style="left:227.26px;top:613px;font-size:8.000px;color:#444;transform:scaleX(0.9400);">1.00 s</div>
<div class="t" style="left:308.70px;top:524px;font-size:8.000px;color:#444;transform:scaleX(0.9400);">Original Priority</div>
<div class="t" style="left:370.00px;top:524px;font-size:8.000px;color:#444;transform:scaleX(0.9400);">:</div>
<div class="t" style="left:443.54px;top:524px;font-size:8.000px;color:#444;transform:scaleX(0.9400);">Standard</div>
<div class="t" style="left:307.02px;top:536px;font-size:8.000px;color:#444;transform:scaleX(0.9400);">Elevated Priority</div>
<div class="t" style="left:370.00px;top:536px;font-size:8.000px;color:#444;transform:scaleX(0.9400);">:</div>
<div class="t" style="left:443.54px;top:536px;font-size:8.000px;color:#444;transform:scaleX(0.9400);">Standard</div>
<div class="t" style="left:323.74px;top:549px;font-size:8.000px;color:#444;transform:scaleX(0.9400);">Status</div>
<div class="t" style="left:370.00px;top:549px;font-size:8.000px;color:#444;transform:scaleX(0.9400);">:</div>
<div class="t" style="left:442.71px;top:549px;font-size:8.000px;color:#444;transform:scaleX(0.9400);">Complete</div>
<div class="t" style="left:323.11px;top:562px;font-size:8.000px;color:#444;transform:scaleX(0.9400);">Queue</div>
<div class="t" style="left:370.00px;top:562px;font-size:8.000px;color:#444;transform:scaleX(0.9400);">:</div>
<div class="t" style="left:445.22px;top:562px;font-size:8.000px;color:#444;transform:scaleX(0.9400);">- None -</div>
<div class="t" style="left:302.40px;top:575px;font-size:8.000px;color:#444;transform:scaleX(0.9345);">Map/Reduce Stage</div>
<div class="t" style="left:370.00px;top:575px;font-size:8.000px;color:#444;transform:scaleX(0.9400);">:</div>
<div class="t" style="left:445.84px;top:575px;font-size:8.000px;color:#444;transform:scaleX(0.9400);">Reduce</div>
<div class="t" style="left:321.86px;top:587px;font-size:8.000px;color:#444;transform:scaleX(0.9400);">Task ID</div>
<div class="t" style="left:370.00px;top:587px;font-size:8.000px;color:#444;transform:scaleX(0.9400);">:</div>
<div class="t" style="left:374.20px;top:587px;font-size:8.000px;color:#444;transform:scaleX(0.9011);">MAPREDUCETASK_02686f177c0a76677077630402</div>
<div class="t" style="left:378.80px;top:600px;font-size:8.000px;color:#444;transform:scaleX(0.9452);">7c7655550d68011f1d016f1c400040_6b4f52565</div>
<div class="t" style="left:396.60px;top:613px;font-size:8.000px;color:#444;transform:scaleX(0.9510);">f6a12bec105633939a417fb2304628f</div>
</body></html>
